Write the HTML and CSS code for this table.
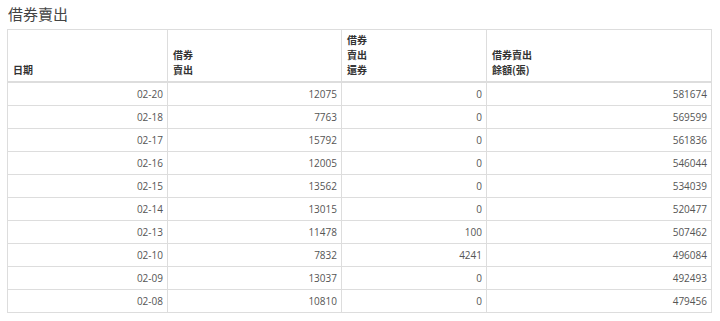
FILE: index.html
```html
<!DOCTYPE html>
<html lang="zh-Hant">
<head>
<meta charset="utf-8">
<title>借券賣出</title>
<link rel="stylesheet" href="styles.css">
</head>
<body>
<div class="page">
  <h3 class="title">借券賣出</h3>
  <table class="data">
    <colgroup>
      <col class="c1"><col class="c2"><col class="c3"><col class="c4">
    </colgroup>
    <thead>
      <tr>
        <th>日期</th>
        <th>借券<br>賣出</th>
        <th>借券<br>賣出<br>還券</th>
        <th>借券賣出<br>餘額(張)</th>
      </tr>
    </thead>
    <tbody>
      <tr><td>02-20</td><td>12075</td><td>0</td><td>581674</td></tr>
      <tr><td>02-18</td><td>7763</td><td>0</td><td>569599</td></tr>
      <tr><td>02-17</td><td>15792</td><td>0</td><td>561836</td></tr>
      <tr><td>02-16</td><td>12005</td><td>0</td><td>546044</td></tr>
      <tr><td>02-15</td><td>13562</td><td>0</td><td>534039</td></tr>
      <tr><td>02-14</td><td>13015</td><td>0</td><td>520477</td></tr>
      <tr><td>02-13</td><td>11478</td><td>100</td><td>507462</td></tr>
      <tr><td>02-10</td><td>7832</td><td>4241</td><td>496084</td></tr>
      <tr><td>02-09</td><td>13037</td><td>0</td><td>492493</td></tr>
      <tr><td>02-08</td><td>10810</td><td>0</td><td>479456</td></tr>
    </tbody>
  </table>
</div>
</body>
</html>
```

FILE: styles.css
```css
html, body {
  margin: 0;
  padding: 0;
  background: #fff;
}
body {
  font-family: "Open Sans", "Noto Sans CJK TC", sans-serif;
  color: #555;
}
.page {
  padding: 0 7px;
}
.title {
  margin: 0 0 5px 1px;
  padding-top: 4px;
  font-size: 15px;
  line-height: 20px;
  font-weight: 400;
  color: #444;
  font-family: "Noto Sans CJK TC", sans-serif;
}
.data {
  width: 704px;
  table-layout: fixed;
  border-collapse: collapse;
  border: 1px solid #ddd;
  font-size: 10px;
}
.c1 { width: 160px; }
.c2 { width: 174px; }
.c3 { width: 145px; }
.c4 { width: 225px; }
.data th {
  text-align: left;
  vertical-align: bottom;
  font-family: "Noto Sans CJK TC", sans-serif;
  font-weight: 700;
  font-size: 10px;
  line-height: 15px;
  color: #333;
  padding: 2px 4px 4px 5px;
  border: 1px solid #ddd;
  border-bottom: 2px solid #ddd;
}
.data td {
  text-align: right;
  padding: 0 4px;
  height: 22px;
  line-height: 22px;
  border: 1px solid #ddd;
  color: #555;
}
```
